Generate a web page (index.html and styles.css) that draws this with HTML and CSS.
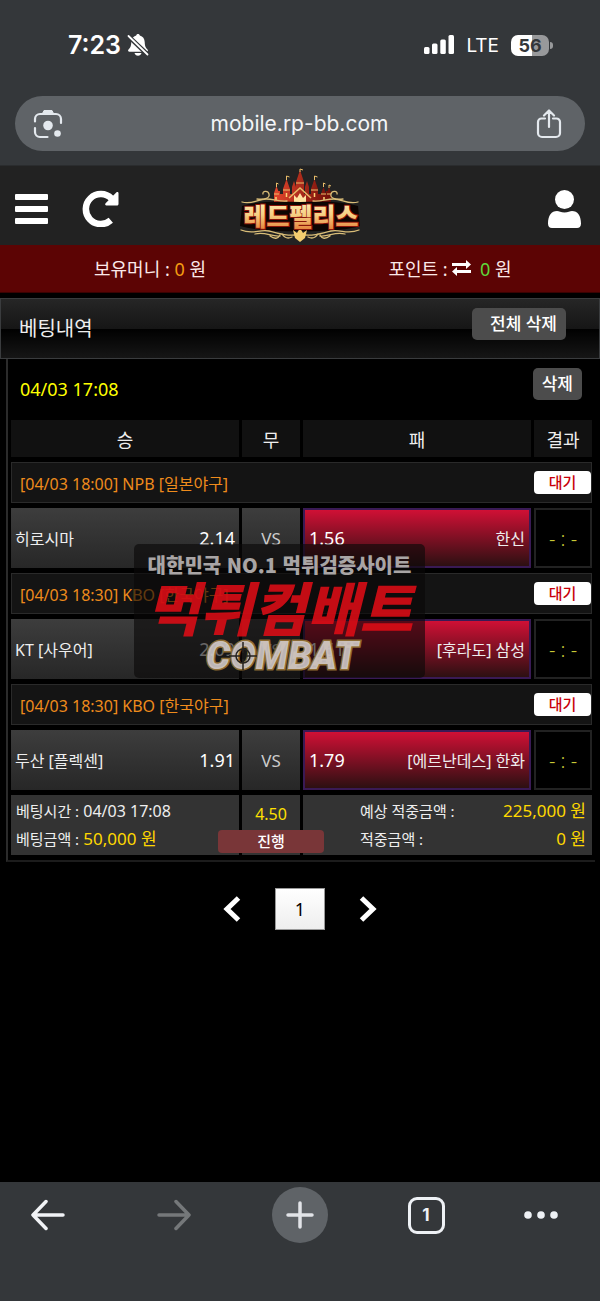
FILE: index.html
```html
<!DOCTYPE html>
<html lang="ko">
<head>
    <meta charset="UTF-8">
    <meta name="viewport" content="width=device-width, initial-scale=1.0">
    <title>베팅내역</title>
    <link rel="stylesheet" href="styles.css">
</head>
<body>
    <!-- Browser top -->
    <div class="browser-top">
        <div class="status-bar">
            <div class="status-left">
                <span class="clock">7:23</span>
                <svg width="22" height="22" viewBox="0 0 22 22">
                    <path fill="#fff" d="M11 0c.9 0 1.600.6 1.800 1.400C16 2.200 17.500 4.700 17.700 8c.2 4 .7 5.500 2.800 7.500.9 1 .3 2.300-1 2.300H2.500c-1.300 0-1.900-1.300-1-2.300C3.600 13.500 4.100 12 4.300 8c.2-3.300 1.700-5.800 4.900-6.600C9.400.6 10.100 0 11 0zM7.500 19h7c-.4 1.600-1.800 2.800-3.500 2.800S7.900 20.600 7.500 19z"/>
                    <path stroke="#34373a" stroke-width="4.500" d="M0 1l21 20"/>
                    <path stroke="#fff" stroke-width="1.800" stroke-linecap="round" d="M1.500 2l19 18.500"/>
                </svg>
            </div>
            <div class="status-right">
                <svg width="30" height="20" viewBox="0 0 30 20" fill="#fff">
                    <rect x="0" y="12" width="5.500" height="7" rx="1.500"/>
                    <rect x="8" y="8.500" width="5.500" height="10.500" rx="1.500"/>
                    <rect x="16.300" y="4.500" width="5.500" height="14.500" rx="1.500"/>
                    <rect x="24.500" y="0" width="5.500" height="19" rx="1.500"/>
                </svg>
                <span class="network">LTE</span>
                <span class="battery">56</span>
            </div>
        </div>
        <div class="address-bar">
            <button class="icon-button" aria-label="렌즈">
                <svg width="30" height="30" viewBox="0 0 30 30" fill="none" stroke="#e4e9ee" stroke-width="2.200" stroke-linecap="round">
                    <path d="M2 12.500V10a5 5 0 0 1 5-5h16a5 5 0 0 1 5 5v4M2 19v4a5 5 0 0 0 5 5h7.500"/>
                    <path d="M9.500 4.500l1.500-3h8l1.500 3z" fill="#e4e9ee" stroke-width="1"/>
                    <circle cx="15" cy="16.500" r="4.800" fill="#e4e9ee" stroke="none"/>
                    <circle cx="24.500" cy="24.500" r="3.300" fill="#e4e9ee" stroke="none"/>
                </svg>
            </button>
            <input class="address" type="text" value="mobile.rp-bb.com" aria-label="주소">
            <button class="icon-button" aria-label="공유">
                <svg width="26" height="30" viewBox="0 0 26 30" fill="none" stroke="#e4e9ee" stroke-width="2.200" stroke-linecap="round" stroke-linejoin="round">
                    <path d="M9 9.500H5.500A3.500 3.500 0 0 0 2 13v11a4 4 0 0 0 4 4h14a4 4 0 0 0 4-4V13a3.500 3.500 0 0 0-3.500-3.500H17M13 18V2M8 6.500l5-5 5 5"/>
                </svg>
            </button>
        </div>
    </div>

    <!-- Site header -->
    <header class="site-header">
        <div class="header-side">
            <button class="icon-button" aria-label="메뉴">
                <svg width="33" height="30" viewBox="0 0 33 30" fill="#fff">
                    <rect width="33" height="6" rx="1"/>
                    <rect y="12" width="33" height="6" rx="1"/>
                    <rect y="24" width="33" height="6" rx="1"/>
                </svg>
            </button>
            <button class="icon-button" aria-label="새로고침">
                <svg width="37" height="37" viewBox="0 0 37 37">
                    <path d="M28.800 30.300A15 15 0 1 1 29.500 8.500" fill="none" stroke="#fff" stroke-width="6.500"/>
                    <path d="M34.500 2.300c.9-.8 2-.3 2 .9V14c0 .9-.6 1.500-1.500 1.500H24.500c-1.300 0-1.800-1.300-.9-2.200z" fill="#fff"/>
                </svg>
            </button>
        </div>
        <a class="logo" href="#" aria-label="레드펠리스">
            <svg width="122" height="76" viewBox="9 8 122 76">
                <defs>
                    <linearGradient id="gold" x1="0" y1="0" x2="0" y2="1">
                        <stop offset="0" stop-color="#fff3c4"/>
                        <stop offset=".5" stop-color="#f6cf83"/>
                        <stop offset="1" stop-color="#e0702c"/>
                    </linearGradient>
                    <linearGradient id="wall" x1="0" y1="0" x2="1" y2="0">
                        <stop offset="0" stop-color="#e3462c"/>
                        <stop offset="1" stop-color="#6e0d08"/>
                    </linearGradient>
                </defs>
                <!-- castle -->
                <g fill="url(#wall)">
                    <path d="M44 44V34h3v-3h3v3h46v-3h3v3h2v10z"/>
                    <path d="M44 42V33l2.500-7 2.500 7v9zM53 42V29l3.500-10 3.500 10v13zM62 40V27l2-6 2 6v13zM66 40V22l4-12 4 12v18zM75 40V27l2-6 2 6v13zM81 42V29l3.500-10 3.500 10v13zM91 42V34l2.500-7 2.500 7v8zM97 42V33l2-6 2 6v9z"/>
                </g>
                <g stroke="#e9bd6a" fill="none">
                    <path d="M46.500 27v-4l2 1M56.500 20v-4l3 1M70 12V9l3 1M84.500 20v-4l3 1M93.500 27v-4l2 1M99 28v-3l2 1"/>
                    <path d="M44 34h5M53 30h7M66 23h8M81 30h7M91 34h5M97 34h4" stroke-width="1.200"/>
                    <path d="M59 38l11-10 11 10" stroke-width="1.500"/>
                </g>
                <path d="M46 37v3M56.500 33v4M84.500 33v4M94 37v3" stroke="#ffd477" stroke-width="1.500"/>
                <path d="M64 42v-7l3 3 3-5 3 5 3-3v7z" fill="#ffe2a0"/>
                <path d="M12 46q20-6 58-4 38-2 58 4l2 20q-20 6-60 5-40 1-60-5z" fill="#0d0503"/>
                <!-- scroll work -->
                <g fill="none" stroke="#d9bd78" stroke-width="1.300" stroke-linecap="round">
                    <path d="M12 42c10 3 16-3 24-3 8 0 14 3 21 2M128 42c-10 3-16-3-24-3-8 0-14 3-21 2"/>
                    <path d="M27 39c8 1 13-1 12-5-1-4-7-3-6 0M113 39c-8 1-13-1-12-5 1-4 7-3 6 0"/>
                    <path d="M11 70c12 5 18-1 28 1 9 2 16 5 26 4M129 70c-12 5-18-1-28 1-9 2-16 5-26 4"/>
                    <path d="M25 74c10-3 16 3 25 2M115 74c-10-3-16 3-25 2M40 76q7 5 10-1M100 76q-7 5-10-1M52 74q4 6 10 3M88 74q-4 6-10 3"/>
                </g>
                <path d="M65 78l-2-8 4 3 3-5 3 5 4-3-2 8-5 4z" fill="#f3cd70"/>
                <text class="logo-text" x="71" y="66" text-anchor="middle" fill="url(#gold)">레드펠리스</text>
            </svg>
        </a>
        <div class="header-side header-right">
            <button class="icon-button" aria-label="내 정보">
                <svg width="33" height="38" viewBox="0 0 33 38" fill="#fff">
                    <circle cx="16.500" cy="9.500" r="9.500"/>
                    <path d="M0 33.500c0-8 3.500-12.500 9-12.500 2 0 4 1.500 7.500 1.500s5.500-1.500 7.500-1.500c5.500 0 9 4.500 9 12.500 0 3-1.500 4.500-4 4.500H4c-2.500 0-4-1.500-4-4.500z"/>
                </svg>
            </button>
        </div>
    </header>

    <div class="money-bar">
        <div class="money">보유머니 : <span class="orange">0</span> 원</div>
        <div class="money">포인트 :
            <svg class="exchange" width="19" height="16" viewBox="0 0 19 16" fill="#fff">
                <path d="M0 3h14V0l5 4.500L14 9V6H0zM19 10H5V7L0 11.500 5 16v-3h14z"/>
            </svg>
            <span class="green">0</span> 원</div>
    </div>

    <main>
        <div class="page-title">
            <h1>베팅내역</h1>
            <button class="button button-all">전체 삭제</button>
        </div>

        <section class="bet">
            <div class="bet-top">
                <span class="bet-date">04/03 17:08</span>
                <button class="button">삭제</button>
            </div>
            <table class="bet-table">
                <colgroup>
                    <col>
                    <col class="col-small">
                    <col>
                    <col class="col-small">
                </colgroup>
                <tr>
                    <th>승</th>
                    <th>무</th>
                    <th>패</th>
                    <th>결과</th>
                </tr>
                <tr class="league">
                    <td colspan="4"><div class="row"><span>[04/03 18:00] NPB [일본야구]</span><span class="badge">대기</span></div></td>
                </tr>
                <tr class="match">
                    <td><div class="row"><span>히로시마</span><span class="odds">2.14</span></div></td>
                    <td class="vs">VS</td>
                    <td class="picked"><div class="row"><span class="odds">1.56</span><span>한신</span></div></td>
                    <td class="score">- : -</td>
                </tr>
                <tr class="league">
                    <td colspan="4"><div class="row"><span>[04/03 18:30] KBO [한국야구]</span><span class="badge">대기</span></div></td>
                </tr>
                <tr class="match">
                    <td><div class="row"><span>KT [사우어]</span><span class="odds">2.09</span></div></td>
                    <td class="vs">VS</td>
                    <td class="picked"><div class="row"><span class="odds">1.61</span><span>[후라도] 삼성</span></div></td>
                    <td class="score">- : -</td>
                </tr>
                <tr class="league">
                    <td colspan="4"><div class="row"><span>[04/03 18:30] KBO [한국야구]</span><span class="badge">대기</span></div></td>
                </tr>
                <tr class="match">
                    <td><div class="row"><span>두산 [플렉센]</span><span class="odds">1.91</span></div></td>
                    <td class="vs">VS</td>
                    <td class="picked"><div class="row"><span class="odds">1.79</span><span>[에르난데스] 한화</span></div></td>
                    <td class="score">- : -</td>
                </tr>
                <tr class="summary">
                    <td>
                        <div class="line"><span class="label">베팅시간 :</span> 04/03 17:08</div>
                        <div class="line"><span class="label">베팅금액 :</span> <span class="amount">50,000 원</span></div>
                    </td>
                    <td class="total">4.50<span class="progress">진행</span></td>
                    <td colspan="2" class="result">
                        <div class="line row"><span class="label">예상 적중금액 :</span><span class="amount">225,000 원</span></div>
                        <div class="line row"><span class="label">적중금액 :</span><span class="amount">0 원</span></div>
                    </td>
                </tr>
            </table>

            <!-- Watermark over the table -->
            <div class="watermark">
                <div class="wm-small">대한민국 NO.1 먹튀검증사이트</div>
                <div class="wm-big">먹튀컴배트</div>
                <svg class="wm-combat" width="170" height="44" viewBox="0 0 170 44">
                    <text class="combat" x="87" y="35" text-anchor="middle">COMBAT</text>
                    <g fill="none" stroke="#26221f" stroke-width="1.500">
                        <circle cx="48" cy="22" r="7"/>
                        <path d="M48 8v11M48 25v11M34 22h11M51 22h11"/>
                    </g>
                </svg>
            </div>
        </section>

        <nav class="pages">
            <a href="#" aria-label="이전">
                <svg width="18" height="26" viewBox="0 0 18 26" fill="none" stroke="#fff" stroke-width="5"><path d="M15.500 2L4 13l11.500 11"/></svg>
            </a>
            <a class="page" href="#">1</a>
            <a href="#" aria-label="다음">
                <svg width="18" height="26" viewBox="0 0 18 26" fill="none" stroke="#fff" stroke-width="5"><path d="M2.500 2L14 13 2.500 24"/></svg>
            </a>
        </nav>
    </main>

    <!-- Browser toolbar -->
    <footer class="toolbar">
        <button class="tool" aria-label="뒤로">
            <svg width="34" height="32" viewBox="0 0 34 32" fill="none" stroke="#f1f3f6" stroke-width="3.500" stroke-linecap="round" stroke-linejoin="round"><path d="M32 16H2M15 2.500L2 16l13 13.500"/></svg>
        </button>
        <button class="tool" aria-label="앞으로">
            <svg width="34" height="32" viewBox="0 0 34 32" fill="none" stroke="#75787a" stroke-width="3.500" stroke-linecap="round" stroke-linejoin="round"><path d="M2 16h30M19 2.500L32 16 19 29.500"/></svg>
        </button>
        <button class="tool tool-new" aria-label="새 탭">
            <svg width="28" height="28" viewBox="0 0 28 28" stroke="#e2e4e8" stroke-width="3.500" stroke-linecap="round"><path d="M14 2v24M2 14h24"/></svg>
        </button>
        <button class="tool"><span class="tab-count">1</span></button>
        <button class="tool tool-more" aria-label="더보기">
            <svg width="34" height="8" viewBox="0 0 34 8" fill="#eef1f5"><circle cx="4" cy="4" r="3.800"/><circle cx="17" cy="4" r="3.800"/><circle cx="30" cy="4" r="3.800"/></svg>
        </button>
    </footer>
</body>
</html>
```
FILE: styles.css
```css
* {
    box-sizing: border-box;
}
body {
    margin: 0;
    min-height: 100vh;
    display: flex;
    flex-direction: column;
    background-color: #000;
    color: #eee;
    font-family: "Noto Sans", "Noto Sans CJK KR", sans-serif;
    font-size: 16px;
}
button {
    font-family: inherit;
    border: 0;
    padding: 0;
    cursor: pointer;
}
a {
    color: inherit;
    text-decoration: none;
}
svg {
    display: block;
}

/* Browser top */
.browser-top {
    background-color: #34373a;
    padding: 30px 15px 14px;
    border-bottom: 1px solid #2a2c2e;
    font-family: Inter, sans-serif;
}
.status-bar {
    display: flex;
    justify-content: space-between;
    align-items: center;
    height: 30px;
    padding: 0 36px 0 53px;
    margin-bottom: 36px;
    color: #fff;
}
.status-left, .status-right {
    display: flex;
    align-items: center;
    gap: 6px;
}
.status-right {
    gap: 12px;
}
.clock {
    font-size: 25px;
    font-weight: 600;
}
.network {
    font-size: 19px;
}
.battery {
    position: relative;
    width: 38px;
    height: 21px;
    border-radius: 7px;
    background: linear-gradient(90deg, #fff 56%, #98999b 56%);
    color: #34373a;
    font-size: 18px;
    font-weight: 700;
    line-height: 21px;
    text-align: center;
}
.battery::after {
    content: "";
    position: absolute;
    right: -4px;
    top: 7px;
    width: 3px;
    height: 7px;
    border-radius: 0 3px 3px 0;
    background-color: #98999b;
}
.address-bar {
    display: flex;
    align-items: center;
    height: 55px;
    padding: 0 23px 0 18px;
    border-radius: 28px;
    background-color: #5f6367;
}
.icon-button {
    background: none;
}
.address {
    flex: 1;
    min-width: 0;
    border: 0;
    background: none;
    color: #f4f6f8;
    font-family: inherit;
    font-size: 21px;
    text-align: center;
}

/* Site header */
.site-header {
    display: flex;
    align-items: center;
    height: 79px;
    padding: 0 19px 0 15px;
    background-color: #222;
}
.header-side {
    flex: 1;
    display: flex;
    align-items: center;
    gap: 34px;
    padding-top: 6px;
}
.header-right {
    justify-content: flex-end;
}
.logo {
    margin-left: 4px;
}
.logo-text {
    font-family: "Noto Sans CJK KR", sans-serif;
    font-size: 25px;
    font-weight: 900;
    stroke: #8a1409;
    stroke-width: 2px;
    paint-order: stroke;
}
.money-bar {
    display: flex;
    height: 48px;
    border-bottom: 1px solid #3a0202;
    background-color: #5c0404;
    color: #fbe9e9;
    font-size: 18px;
    line-height: 49px;
}
.money {
    flex: 1;
    text-align: center;
}
.exchange {
    display: inline-block;
    margin-right: 4px;
}
.orange {
    color: #f39c12;
}
.green {
    color: #5fd83a;
}

/* Bet list */
main {
    flex: 1;
    padding-top: 5px;
}
.page-title {
    display: flex;
    justify-content: space-between;
    height: 61px;
    padding: 0 33px 0 18px;
    border: 1px solid #3a3c3e;
    background: linear-gradient(#262626, #161616 50%, #000 50%, #161616);
}
h1 {
    margin: 0;
    font-size: 20px;
    font-weight: 400;
    line-height: 60px;
}
.button {
    height: 32px;
    padding: 0 9px;
    border-radius: 5px;
    background-color: #4c4c4c;
    color: #fff;
    font-size: 17px;
    font-weight: 500;
    line-height: 30px;
}
.button-all {
    margin-top: 9px;
    padding-left: 18px;
}
.bet {
    position: relative;
    margin: 0 5px 0 6px;
    border-left: 2px solid #2b2b2b;
    border-bottom: 2px solid #1c1c1c;
}
.bet-top {
    display: flex;
    justify-content: space-between;
    height: 56px;
    padding: 9px 13px 0 12px;
}
.bet-date {
    color: #ff0;
    font-size: 18px;
    line-height: 42px;
}
.bet-table {
    width: 100%;
    table-layout: fixed;
    border-collapse: separate;
    border-spacing: 3px 5px;
}
.col-small {
    width: 58px;
}
th, td {
    padding: 0;
}
th {
    height: 37px;
    background-color: #111;
    font-size: 18px;
    font-weight: 400;
}
.row {
    display: flex;
    justify-content: space-between;
    align-items: center;
}
.league td {
    height: 41px;
    padding-left: 8px;
    border: 1px solid #2a2a2a;
    background-color: #141414;
    color: #ee8b1c;
}
.badge {
    width: 57px;
    height: 23px;
    border-radius: 4px;
    background-color: #fff;
    color: #c8000a;
    font-size: 15px;
    font-weight: 500;
    line-height: 22px;
    text-align: center;
}
.match td {
    height: 60px;
    padding: 0 4px;
    background: linear-gradient(#3d3d3d, #272727);
}
.match .odds {
    color: #fff;
    font-size: 18px;
}
.match .picked {
    border: 2px solid #3a1a55;
    background: linear-gradient(#d01035, #2c1012);
}
.match .vs {
    color: #ccc;
    font-size: 17px;
    text-align: center;
}
.match .score {
    border: 2px solid #222;
    background: #000;
    color: #c9c936;
    font-size: 20px;
    font-weight: 300;
    text-align: center;
}
.summary td {
    height: 60px;
    padding: 2px 0 0 5px;
    background-color: #333;
    vertical-align: top;
}
.line {
    height: 28px;
    line-height: 28px;
    white-space: nowrap;
}
.label {
    font-size: 15px;
}
.amount {
    color: #ffd800;
    font-size: 17px;
}
.summary .total {
    position: relative;
    padding: 0;
    color: #ffe000;
    line-height: 38px;
    text-align: center;
}
.progress {
    position: absolute;
    left: -24px;
    right: -24px;
    bottom: 2px;
    border-radius: 4px;
    background-color: #793638;
    color: #fff;
    font-size: 15px;
    font-weight: 500;
    line-height: 23px;
}
.summary .result {
    padding: 2px 6px 0 57px;
}

/* Watermark */
.watermark {
    position: absolute;
    left: 126px;
    top: 185px;
    width: 291px;
    height: 134px;
    padding-top: 8px;
    border-radius: 5px;
    background-color: rgba(10, 8, 8, 0.62);
    font-family: "Noto Sans CJK KR", sans-serif;
    font-weight: 900;
    text-align: center;
    white-space: nowrap;
    pointer-events: none;
}
.wm-small {
    color: #a9a5a5;
    font-size: 20px;
    line-height: 26px;
}
.wm-big {
    color: rgba(222, 12, 22, 0.88);
    font-size: 58px;
    font-style: italic;
    line-height: 56px;
}
.wm-combat {
    margin: 0 auto;
}
.combat {
    font-family: Roboto, sans-serif;
    font-size: 38px;
    font-style: italic;
    font-weight: 900;
    fill: rgba(212, 205, 205, 0.9);
    stroke: #8d6c34;
    stroke-width: 3px;
    paint-order: stroke;
}

/* Pagination */
.pages {
    display: flex;
    justify-content: center;
    align-items: center;
    gap: 34px;
    padding: 26px 0;
}
.page {
    width: 50px;
    height: 42px;
    border: 1px solid #999;
    background: linear-gradient(#fff, #eee);
    color: #000;
    font-size: 18px;
    line-height: 40px;
    text-align: center;
}

/* Browser toolbar */
.toolbar {
    display: flex;
    justify-content: space-between;
    height: 119px;
    padding: 5px 20px 0;
    background-color: #34373a;
}
.tool {
    display: flex;
    justify-content: center;
    align-items: center;
    width: 56px;
    height: 56px;
    border-radius: 50%;
    background: none;
}
.tool-new {
    background-color: #5f6367;
}
.tool-more {
    justify-content: flex-start;
}
.tab-count {
    width: 37px;
    height: 37px;
    border: 3px solid #eef1f5;
    border-radius: 9px;
    color: #eef1f5;
    font-family: Inter, sans-serif;
    font-size: 17px;
    font-weight: 700;
    line-height: 31px;
}
```
